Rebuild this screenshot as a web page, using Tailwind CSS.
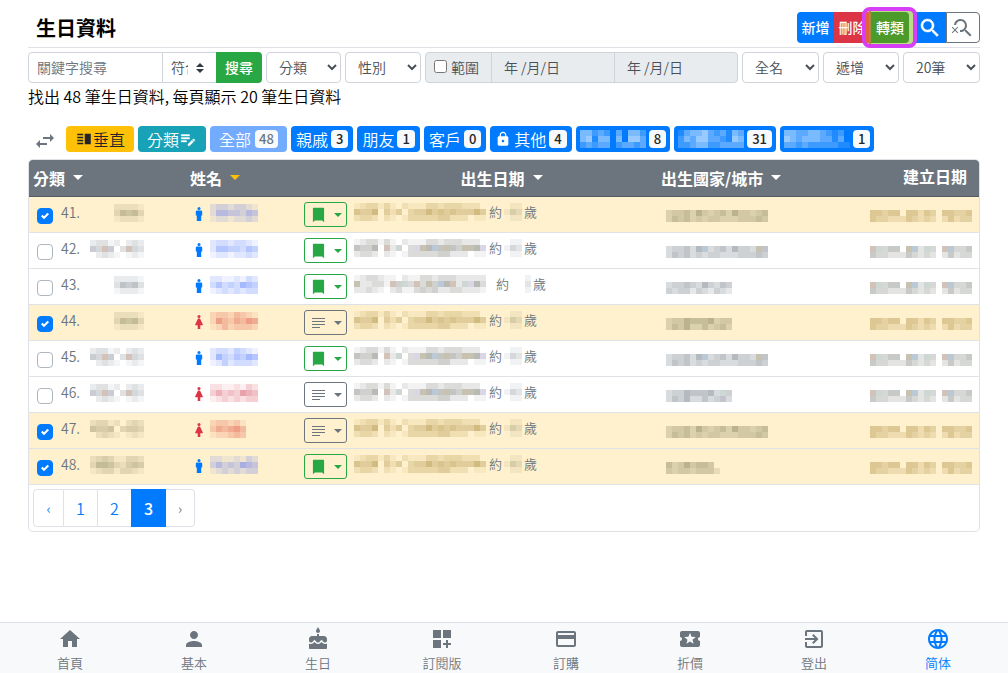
<!DOCTYPE html>
<html lang="zh-Hant">
<head>
<meta charset="utf-8">
<meta name="viewport" content="width=device-width, initial-scale=1">
<title>生日資料</title>
<script src="https://cdn.jsdelivr.net/npm/@tailwindcss/browser@4"></script>
</head>
<body class="flex min-h-screen flex-col bg-white font-['Noto_Sans_CJK_TC',sans-serif] text-base font-[350] text-black">

<main class="grow px-7">
  <header class="flex h-12 items-end justify-between border-b border-[#dee2e6] pb-1">
    <h1 class="pb-[3px] pl-2 text-xl leading-6 font-bold">生日資料</h1>
    <div class="flex h-[31px] text-sm font-medium text-white">
      <button class="w-[37px] rounded-l bg-[#007bff] pb-px whitespace-nowrap">新增</button>
      <button class="w-[37px] bg-[#dc3545] pb-px whitespace-nowrap">刪除</button>
      <div class="relative w-[38px]">
        <span class="absolute -top-[5px] -right-2 -bottom-[5px] -left-[9px] z-10 rounded-lg border-4 border-[#d63ff5] bg-[linear-gradient(to_right,#e8903080_3px,#a88c40_3px_5px,#b9dd88_5px)]"></span>
        <button class="relative z-20 h-full w-full rounded-r bg-[#4c9a2a] pb-px whitespace-nowrap">轉類</button>
      </div>
      <button class="flex w-[37px] items-center justify-center bg-[#007bff] pl-1" aria-label="搜尋"><svg class="h-6 w-6" viewBox="0 0 24 24" fill="currentColor" stroke="currentColor" stroke-width=".5"><path d="M15.5 14h-.79l-.28-.27C15.41 12.59 16 11.11 16 9.5 16 5.91 13.09 3 9.5 3S3 5.91 3 9.5 5.91 16 9.5 16c1.61 0 3.09-.59 4.23-1.57l.27.28v.79l5 4.99L20.49 19l-4.99-5zm-6 0C7.01 14 5 11.99 5 9.5S7.01 5 9.5 5 14 7.01 14 9.5 11.99 14 9.5 14z"/></svg></button>
      <button class="flex w-[34px] items-center justify-center rounded-r border border-[#6c757d] text-[#6c757d]" aria-label="清除搜尋"><svg class="h-6 w-6" viewBox="0 0 24 24" fill="currentColor"><path d="M15.5 14h-.79l-.28-.27C15.41 12.59 16 11.11 16 9.5 16 5.91 13.09 3 9.5 3 6.08 3 3.28 5.64 3.03 9h2.02C5.3 6.75 7.18 5 9.5 5 11.99 5 14 7.01 14 9.5S11.99 14 9.5 14c-.17 0-.33-.03-.5-.05v2.02c.17.02.33.03.5.03 1.61 0 3.09-.59 4.23-1.57l.27.28v.79l5 4.99L20.49 19l-4.99-5z"/><path d="M6.47 10.82 4 13.29l-2.47-2.47-.71.71L3.29 14 .82 16.47l.71.71L4 14.71l2.47 2.47.71-.71L4.71 14l2.47-2.47z"/></svg></button>
    </div>
  </header>

  <form class="mt-1 flex h-[31px] gap-1 text-sm text-[#495057]">
    <div class="flex w-[234px]">
      <input type="text" aria-label="關鍵字搜尋" placeholder="關鍵字搜尋" class="w-[135px] rounded-l border border-[#ced4da] px-2 pb-0.5 placeholder:text-[#6c757d]">
      <div class="relative w-[53px]">
        <select aria-label="符合方式" class="h-full w-full appearance-none border-y border-[#ced4da] pr-7 pb-0.5 pl-2"><option>符合</option></select>
        <svg class="pointer-events-none absolute top-[11px] right-3 h-[10px] w-2" viewBox="0 0 8 10" fill="#343a40"><path d="M4 0 8 4H0zM4 10 0 6h8z"/></svg>
      </div>
      <button type="button" class="w-[46px] rounded-r bg-[#28a745] pb-0.5 font-medium text-white">搜尋</button>
    </div>
    <select aria-label="分類" class="w-[75px] rounded border border-[#ced4da] bg-white pb-0.5 pl-2"><option>分類</option></select>
    <select aria-label="性別" class="w-[76px] rounded border border-[#ced4da] bg-white pb-0.5 pl-2"><option>性別</option></select>
    <div class="flex grow rounded border border-[#ced4da] bg-[#e9ecef]">
      <label class="flex w-[66px] items-center gap-1 border-r border-[#ced4da] pb-0.5 pl-2 whitespace-nowrap"><input type="checkbox" class="h-[13px] w-[13px]">範圍</label>
      <input type="text" aria-label="開始日期" disabled value="年 /月/日" class="w-0 grow border-r border-[#ced4da] pb-0.5 pl-3">
      <input type="text" aria-label="結束日期" disabled value="年 /月/日" class="w-0 grow pb-0.5 pl-3">
    </div>
    <select aria-label="姓名顯示" class="w-[77px] rounded border border-[#ced4da] bg-white pb-0.5 pl-2"><option>全名</option></select>
    <select aria-label="排序" class="w-[76px] rounded border border-[#ced4da] bg-white pb-0.5 pl-2"><option>遞增</option></select>
    <select aria-label="每頁筆數" class="w-[77px] rounded border border-[#ced4da] bg-white pb-0.5 pl-2"><option>20筆</option></select>
  </form>

  <p class="mt-px h-6 leading-6">找出 48 筆生日資料, 每頁顯示 20 筆生日資料</p>

  <div id="filters" class="mt-[18px] flex h-[26px] gap-1 whitespace-nowrap text-white">
    <button class="flex w-[34px] items-center justify-center pt-1 text-[#6c757d]" aria-label="切換"><svg class="h-6 w-6" viewBox="0 0 24 24" fill="currentColor"><path d="M6.99 11L3 15l3.99 4v-3H14v-2H6.99v-3zM21 9l-3.99-4v3H10v2h7.01v3L21 9z"/></svg></button>
    <button class="flex w-[68px] items-center justify-center rounded bg-[#ffc107] text-[#212529]"><svg class="h-[18px] w-[18px]" viewBox="0 0 24 24" fill="currentColor"><path d="M3 15h8v-2H3v2zm0 4h8v-2H3v2zm0-8h8V9H3v2zm0-6v2h8V5H3zm10 0h8v14h-8V5z"/></svg>垂直</button>
    <button class="flex w-[68px] items-center justify-center rounded bg-[#17a2b8]">分類<svg class="h-[18px] w-[18px]" viewBox="0 0 24 24" fill="currentColor" stroke="currentColor" stroke-width=".5"><path d="M3 10h11v2H3zM3 6h11v2H3zM3 14h7v2H3zM18.01 12.87l.71-.71c.39-.39 1.02-.39 1.41 0l.71.71c.39.39.39 1.02 0 1.41l-.71.71-2.12-2.12zM17.3 13.58l-5.3 5.3V21h2.12l5.3-5.3-2.12-2.12z"/></svg></button>
  </div>

  <section class="mt-[7px] overflow-hidden rounded-[5px] border border-[#dee2e6]">
    <table class="w-full table-fixed border-collapse">
      <colgroup><col class="w-[157px]"><col class="w-[118px]"><col class="w-[43px]"><col class="w-[309px]"><col class="w-[209px]"><col class="w-[114px]"></colgroup>
      <thead>
        <tr class="h-9 border-b border-[#545b62] bg-[#6c757d] text-left text-white">
          <th class="py-0 pl-1"><button class="flex items-center gap-2 font-bold">分類<span class="border-x-5 border-t-5 border-x-transparent border-t-white"></span></button></th>
          <th class="py-0 pl-1"><button class="flex items-center gap-2 font-bold">姓名<span class="border-x-5 border-t-5 border-x-transparent border-t-[#ffc107]"></span></button></th>
          <th></th>
          <th class="py-0"><button class="mx-auto flex items-center gap-2 font-bold">出生日期<span class="border-x-5 border-t-5 border-x-transparent border-t-white"></span></button></th>
          <th class="py-0 pl-[5px]"><button class="flex items-center gap-2 font-bold">出生國家/城市<span class="border-x-5 border-t-5 border-x-transparent border-t-white"></span></button></th>
          <th class="pt-0 pr-3 pb-1 text-right leading-6">建立日期</th>
        </tr>
      </thead>
      <tbody id="rows"></tbody>
    </table>
    <nav class="flex px-1 py-1" aria-label="分頁">
      <a href="#" class="flex h-[38px] w-[31px] items-center justify-center rounded-l border border-[#dee2e6] text-sm text-[#007bff]">‹</a>
      <a href="#" class="flex h-[38px] w-[34px] items-center justify-center border-y border-r border-[#dee2e6] text-[#007bff]">1</a>
      <a href="#" class="flex h-[38px] w-[33px] items-center justify-center border-y border-[#dee2e6] text-[#007bff]">2</a>
      <a href="#" aria-current="page" class="flex h-[38px] w-[35px] items-center justify-center bg-[#007bff] font-medium text-white">3</a>
      <a href="#" class="flex h-[38px] w-[29px] items-center justify-center rounded-r border-y border-r border-[#dee2e6] text-sm text-[#6c757d]">›</a>
    </nav>
  </section>
</main>

<nav id="tabs" class="flex h-[51px] border-t border-[#dee2e6] bg-[#f8f9fa] px-2" aria-label="主選單"></nav>

<script>
// Tints for the pixelated private fields; digits set the strength of the base tint.
const TINT = { r: '#c4aea0', g: '#bccac6', b: '#a4b6c8', p: '#cdc8dc', y: '#b4ae94' };
function mosaic(rows, base, step) {
  const lines = rows.split('/');
  const w = lines[0].length * 6, h = lines.length * 6;
  let cells = '';
  lines.forEach((line, y) => [...line].forEach((c, x) => {
    if (c === '.') return;
    const fill = TINT[c] || base;
    const op = TINT[c] ? 0.75 : Number(c) * step;
    cells += `<rect x="${x * 6}" y="${y * 6}" width="6" height="6" fill="${fill}" fill-opacity="${op.toFixed(2)}"/>`;
  }));
  return `<svg class="shrink-0" aria-hidden="true" shape-rendering="crispEdges" width="${w}" height="${h}">${cells}</svg>`;
}

const LOCK = '<svg class="h-4 w-4" viewBox="0 0 24 24" fill="currentColor"><path d="M18 8h-1V6c0-2.76-2.24-5-5-5S7 3.24 7 6v2H6c-1.1 0-2 .9-2 2v10c0 1.1.9 2 2 2h12c1.1 0 2-.9 2-2V10c0-1.1-.9-2-2-2zm-6 9c-1.1 0-2-.9-2-2s.9-2 2-2 2 .9 2 2-.9 2-2 2zm3.1-9H8.9V6c0-1.71 1.39-3.1 3.1-3.1 1.71 0 3.1 1.39 3.1 3.1v2z"/></svg>';
const filters = [
  ['親戚', 3, 'px-[5px]'], ['朋友', 1, 'px-[5px]'], ['客戶', 0, 'px-[5px]'],
  [LOCK + '<span>其他</span>', 4, 'px-[5px]'],
  [mosaic('44232.3.442/45144.4.553/23233.23323', '#ffffff', 0.12), 8, 'px-1'],
  [mosaic('13445323143/24355332154/22344223333', '#ffffff', 0.12), 31, 'px-1'],
  [mosaic('4433443212./5434443313./33232222211', '#ffffff', 0.12), 1, 'px-1'],
];
document.getElementById('filters').insertAdjacentHTML('beforeend',
  '<button class="flex w-[77px] items-center justify-center gap-1 rounded bg-[#73abff]">全部<span class="rounded bg-[#f8f9fa] px-1 text-[13px] leading-[18px] font-medium text-[#6c757d]">48</span></button>' +
  filters.map(([label, n, pad]) => `<button class="flex items-center gap-[3px] rounded bg-[#007bff] ${pad}">${label}<span class="rounded bg-[#f8f9fa] px-[5px] text-[13px] leading-[18px] font-medium text-[#212529]">${n}</span></button>`).join(''));

const MALE = '<svg class="h-[14px] w-2 text-[#007bff]" viewBox="0 0 8 14" fill="currentColor"><circle cx="4" cy="1.6" r="1.5"/><path d="M2 3.6h4a1.2 1.2 0 0 1 1.2 1.2v3.6H6.2V14H1.8V8.4H.8V4.8A1.2 1.2 0 0 1 2 3.6z"/></svg>';
const FEMALE = '<svg class="h-[14px] w-2 text-[#dc3545]" viewBox="0 0 8 14" fill="currentColor"><circle cx="4" cy="1.6" r="1.5"/><path d="M3 3.6h2L7.8 9.5v.7H5.3V14H2.7v-3.8H.2v-.7z"/></svg>';
const BOOKMARK = '<svg class="h-4 w-[13px]" viewBox="4 2 16 20" fill="currentColor"><path d="M6 3h12a1 1 0 0 1 1 1v17l-2.500-2h-9L5 21V4a1 1 0 0 1 1-1z"/></svg>';
const LINES = '<svg class="h-3 w-[13px]" viewBox="0 0 13 12" fill="currentColor" shape-rendering="crispEdges"><path d="M0 1h13v1H0zM0 4h13v1H0zM0 7h13v1H0zM0 10h8v1H0z"/></svg>';
const TICK = '<svg class="pointer-events-none col-start-1 row-start-1 m-auto h-2 w-2" viewBox="0 0 8 8" fill="#fff"><path d="M6.564.75l-3.59 3.612-1.538-1.55L0 4.26 2.974 7.25 8 2.193z"/></svg>';

const CAT = {
  a: '....22221/....36563/....12221',
  b: '23312.232/54r5.3r43/.2321.121',
  c: '234311332/366532454/123313321',
};
const NAME = {
  a: '23323321./25544354./12212232.',
  b: '22112132./35343654./12323233.',
  c: '23324321./26435465./12423332.',
  d: '233231/354564/122343',
};
const DATE = {
  a: '1233131.2111332333222./5446.r2g.3py6b5y54yy6p/2332.21.13333344222.11',
  b: '1233211.21133233322222/y22331r4g3r3y4b6r2gp63/22321.2311343422332221',
};
const PLACE = {
  a: '................./344536b34536443y5/35453434433344454',
  b: '.........../34454364354/43442432432',
  c: '.........../344655563g4/35463353453',
  d: '........./5346455g./434434442',
};
const CREATED = 'rg344.yb2g3.rb334/43322243232.24233';
const rows = [
  [41, 1, 'a', 'm', 'a', 1, 'a', 'a'], [42, 0, 'b', 'm', 'a', 1, 'a', 'a'],
  [43, 0, 'a', 'm', 'b', 1, 'b', 'b'], [44, 1, 'a', 'f', 'c', 0, 'a', 'c'],
  [45, 0, 'b', 'm', 'c', 1, 'a', 'a'], [46, 0, 'b', 'f', 'b', 0, 'a', 'c'],
  [47, 1, 'b', 'f', 'd', 0, 'a', 'a'], [48, 1, 'c', 'm', 'b', 1, 'a', 'd'],
];
document.getElementById('rows').innerHTML = rows.map(([n, on, cat, sex, name, mark, date, place]) => {
  const gray = on ? '#5c5c38' : '#4c5a66', gold = on ? '#947018' : '#555a52';
  const soft = s => on ? s.replace(/[rgbpy]/g, '4') : s;
  const who = sex === 'm' ? (on ? '#3050ff' : '#2858ff') : (on ? '#d42c20' : '#cc2038');
  const wide = date === 'b';
  return `<tr class="h-9 border-b border-[#dee2e6] ${on ? 'bg-[#fff1cd]' : 'bg-white'}">
    <td class="p-0 pl-2"><div class="flex items-center">
      <span class="mt-[3px] grid"><input type="checkbox" aria-label="選取 ${n}" ${on ? 'checked' : ''} class="col-start-1 row-start-1 h-4 w-4 appearance-none rounded border border-[#adb5bd] bg-white checked:border-[#007bff] checked:bg-[#007bff]">${on ? TICK : ''}</span>
      <span class="mb-1 ml-2 w-[29px] text-sm leading-5 text-[#6c757d]">${n}.</span>
      <span class="mb-[3px]">${mosaic(soft(CAT[cat]), gray, 0.06)}</span></div></td>
    <td class="p-0 pl-[9px]"><div class="flex items-center gap-[7px]">${sex === 'm' ? MALE : FEMALE}<span class="mb-[3px]">${mosaic(NAME[name], who, 0.07)}</span></div></td>
    <td class="p-0"><button aria-label="註記" class="flex h-[25px] w-[43px] items-center justify-between rounded-[3px] border pt-0.5 pr-1 pl-[7px] ${mark ? 'border-[#28a745] text-[#28a745]' : 'border-[#6c757d] text-[#6c757d]'}">${mark ? BOOKMARK : LINES}<span class="border-x-4 border-t-4 border-x-transparent border-t-current"></span></button></td>
    <td class="p-0 pl-[7px]"><div class="mb-1 flex items-center text-[13px] leading-[18px] text-[#6c757d]">${mosaic(soft(DATE[date]), gold, 0.07)}<span class="${wide ? 'ml-[10px]' : 'ml-[3px]'}">約</span><span class="mr-0.5 ${wide ? 'ml-1' : 'ml-0.5'}">${mosaic(wide ? '..1/..2/..1' : '.11/132/.11', gray, 0.08)}</span>歲</div></td>
    <td class="p-0 pl-[10px]"><div class="mb-[3px]">${mosaic(soft(PLACE[place]), gray, 0.07)}</div></td>
    <td class="p-0 pr-[7px]"><div class="mt-[3px] flex justify-end">${mosaic(soft(CREATED), gold, 0.08)}</div></td>
  </tr>`;
}).join('');

const tabs = [
  ['首頁', 'M10 20v-6h4v6h5v-8h3L12 3 2 12h3v8z'],
  ['基本', 'M12 12c2.21 0 4-1.79 4-4s-1.79-4-4-4-4 1.79-4 4 1.79 4 4 4zm0 2c-2.67 0-8 1.34-8 4v2h16v-2c0-2.66-5.33-4-8-4z'],
  ['生日', 'M12 6c1.11 0 2-.9 2-2 0-.38-.1-.73-.29-1.03L12 0l-1.71 2.97c-.19.3-.29.65-.29 1.03 0 1.1.9 2 2 2zm4.6 9.99l-1.07-1.07-1.08 1.07c-1.3 1.3-3.58 1.31-4.89 0l-1.07-1.07-1.09 1.07C6.75 16.64 5.88 17 4.96 17c-.73 0-1.4-.23-1.96-.61V21c0 .55.45 1 1 1h16c.55 0 1-.45 1-1v-4.61c-.56.38-1.23.61-1.96.61-.92 0-1.79-.36-2.44-1.01zM18 9h-5V7h-2v2H6c-1.66 0-3 1.34-3 3v1.54c0 1.08.88 1.96 1.96 1.96.52 0 1.02-.2 1.38-.57l2.14-2.13 2.13 2.13c.74.74 2.03.74 2.77 0l2.14-2.13 2.13 2.13c.37.37.86.57 1.38.57 1.08 0 1.96-.88 1.96-1.96V12C21 10.34 19.66 9 18 9z'],
  ['訂閱版', 'M3 3h8v8H3zM13 3h8v8h-8zM3 13h8v8H3zM18 13h-2v3h-3v2h3v3h2v-3h3v-2h-3z'],
  ['訂購', 'M20 4H4c-1.11 0-1.99.89-1.99 2L2 18c0 1.11.89 2 2 2h16c1.11 0 2-.89 2-2V6c0-1.11-.89-2-2-2zm0 14H4v-6h16v6zm0-10H4V6h16v2z'],
  ['折價', 'M20 12c0-1.1.9-2 2-2V6c0-1.1-.9-2-2-2H4c-1.1 0-1.99.9-1.99 2v4c1.1 0 1.99.9 1.99 2s-.89 2-2 2v4c0 1.1.9 2 2 2h16c1.1 0 2-.9 2-2v-4c-1.1 0-2-.9-2-2zm-4.42 4.8L12 14.5l-3.58 2.3 1.08-4.12-3.29-2.69 4.24-.25L12 5.8l1.54 3.95 4.24.25-3.29 2.69 1.09 4.11z'],
  ['登出', 'M10.09 15.59L11.5 17l5-5-5-5-1.41 1.41L12.67 11H3v2h9.67l-2.58 2.59zM19 3H5c-1.11 0-2 .9-2 2v4h2V5h14v14H5v-4H3v4c0 1.1.89 2 2 2h14c1.1 0 2-.9 2-2V5c0-1.1-.9-2-2-2z'],
  ['简体', 'M11.99 2C6.47 2 2 6.48 2 12s4.47 10 9.99 10C17.52 22 22 17.52 22 12S17.52 2 11.99 2zm6.93 6h-2.95c-.32-1.25-.78-2.45-1.38-3.56 1.84.63 3.37 1.91 4.33 3.56zM12 4.04c.83 1.2 1.48 2.53 1.91 3.96h-3.82c.43-1.43 1.08-2.76 1.91-3.96zM4.26 14C4.1 13.36 4 12.69 4 12s.1-1.36.26-2h3.38c-.08.66-.14 1.32-.14 2 0 .68.06 1.34.14 2H4.26zm.82 2h2.95c.32 1.25.78 2.45 1.38 3.56-1.84-.63-3.37-1.9-4.33-3.56zm2.95-8H5.08c.96-1.66 2.49-2.93 4.33-3.56C8.81 5.55 8.35 6.75 8.03 8zM12 19.96c-.83-1.2-1.48-2.53-1.91-3.96h3.82c-.43 1.43-1.08 2.76-1.91 3.96zM14.34 14H9.66c-.09-.66-.16-1.32-.16-2 0-.68.07-1.35.16-2h4.68c.09.65.16 1.32.16 2 0 .68-.07 1.34-.16 2zm.25 5.56c.6-1.11 1.06-2.31 1.38-3.56h2.95c-.96 1.65-2.49 2.93-4.33 3.56zM16.36 14c.08-.66.14-1.32.14-2 0-.68-.06-1.34-.14-2h3.38c.16.64.26 1.31.26 2s-.1 1.36-.26 2h-3.38z'],
];
document.getElementById('tabs').innerHTML = tabs.map(([label, d], i) =>
  `<a href="#" class="flex flex-1 flex-col items-center gap-0.5 pt-1 text-[13px] leading-5 ${i === 7 ? 'text-[#007bff]' : 'text-[#6c757d]'}"><svg class="h-6 w-6 shrink-0" viewBox="0 0 24 24" fill="currentColor"><path d="${d}"/></svg>${label}</a>`).join('');
</script>
</body>
</html>
